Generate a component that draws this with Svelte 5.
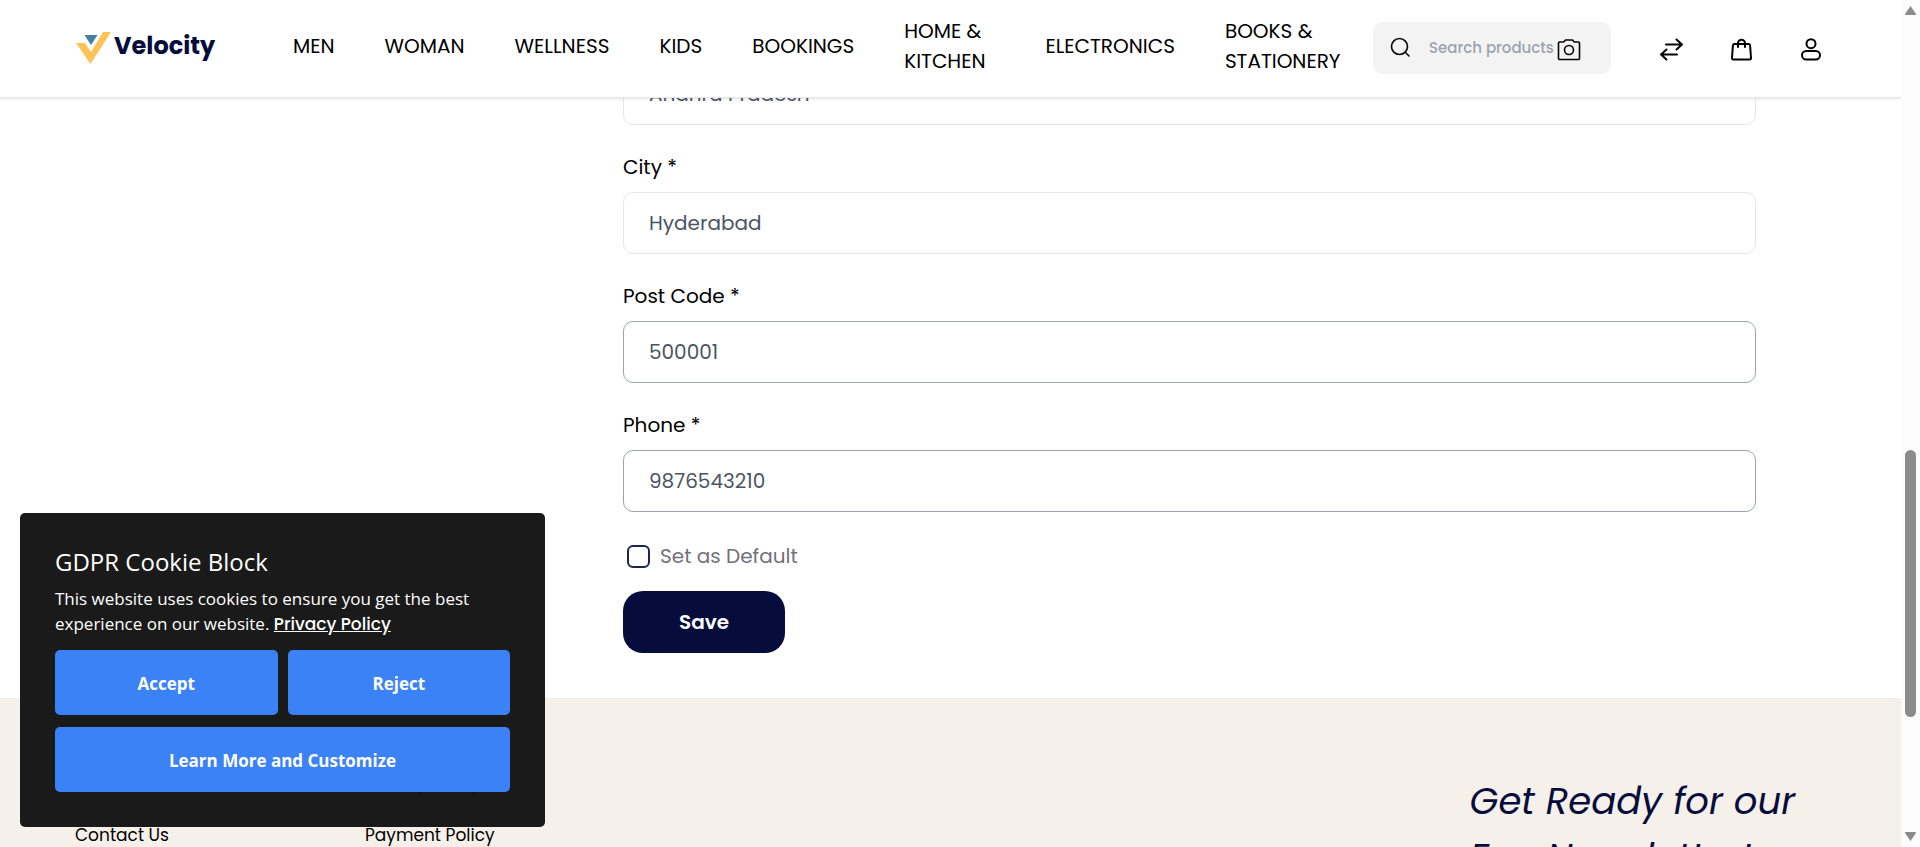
<script>
  const nav = ['MEN', 'WOMAN', 'WELLNESS', 'KIDS', 'BOOKINGS', 'HOME & KITCHEN', 'ELECTRONICS', 'BOOKS & STATIONERY'];
  const fields = [
    { id: 'city', label: 'City *', value: 'Hyderabad', strong: false },
    { id: 'postcode', label: 'Post Code *', value: '500001', strong: true },
    { id: 'phone', label: 'Phone *', value: '9876543210', strong: true }
  ];
  const columns = [
    ['About Us', 'Contact Us'],
    ['Privacy Policy', 'Payment Policy']
  ];
</script>

<div class="page">
  <header>
    <a class="logo" href="#home" aria-label="Velocity">
      <svg width="36" height="32" viewBox="0 0 36 32" aria-hidden="true">
        <path d="M0 11h9l6 9L27 0h8L14.500 32z" fill="#fec356" />
        <path d="M8.500 3h13l-6.500 10z" fill="#477da8" />
      </svg>
      <span>Velocity</span>
    </a>
    <nav>
      {#each nav as item}
        <a href="#shop">{item}</a>
      {/each}
    </nav>
    <form class="search" onsubmit={(e) => e.preventDefault()}>
      <svg class="i20" viewBox="0 0 20 20" aria-hidden="true"><circle cx="8.500" cy="8.500" r="8" /><path d="m14.500 14.500 3.500 3.500" /></svg>
      <input type="text" placeholder="Search products" aria-label="Search products" />
      <button type="button" aria-label="Search by image">
        <svg class="i24" viewBox="0 0 24 24"><path d="M2.500 6H6q1 0 1.500-.8L8.500 4h7l1 1.200Q17 6 18 6h3.500q1 0 1 1v15.500q0 1-1 1h-19q-1 0-1-1V7q0-1 1-1Z" /><circle cx="12" cy="14" r="4.500" /></svg>
      </button>
    </form>
    <div class="actions">
      <a href="#compare" aria-label="Compare"><svg class="i24" viewBox="0 0 24 24"><path d="M7 8.500h16M17.500 3.500l5.500 5-5.500 5M18 18.500H2M7.500 13.500l-5.500 5 5.500 5" /></svg></a>
      <a href="#cart" aria-label="Cart"><svg class="i24" viewBox="0 0 24 24"><path d="M5.500 8h14q1.500 0 1.600 1.500l.9 12.500q0 1.500-1.500 1.500h-16q-1.500 0-1.500-1.500l.9-12.500Q4 8 5.500 8ZM9 11V7.200a3.500 3.500 0 0 1 7 0V11" /></svg></a>
      <a href="#profile" aria-label="Profile"><svg class="i24" viewBox="0 0 24 24"><circle cx="12" cy="7.700" r="4.500" /><rect x="3" y="15" width="18" height="8.500" rx="4.250" /></svg></a>
    </div>
  </header>

  <main>
    <form class="address" onsubmit={(e) => e.preventDefault()}>
      <div class="field">
        <input type="text" value="Andhra Pradesh" aria-label="State" />
      </div>
      {#each fields as f}
        <div class="field">
          <label for={f.id}>{f.label}</label>
          <input id={f.id} class:strong={f.strong} type="text" value={f.value} />
        </div>
      {/each}
      <div class="default">
        <input id="default" type="checkbox" />
        <label for="default">Set as Default</label>
      </div>
      <button class="save" type="submit">Save</button>
    </form>
  </main>

  <footer>
    <div class="links">
      {#each columns as col}
        <ul>
          {#each col as link}
            <li><a href="#info">{link}</a></li>
          {/each}
        </ul>
      {/each}
    </div>
    <p class="news">Get Ready for our<br />Fun Newsletter!</p>
  </footer>

  <section class="cookie" aria-label="Cookie consent">
    <h2>GDPR Cookie Block</h2>
    <p>This website uses cookies to ensure you get the best experience on our website. <a href="#privacy">Privacy Policy</a></p>
    <div class="choices">
      <button type="button">Accept</button>
      <button type="button">Reject</button>
      <button class="wide" type="button">Learn More and Customize</button>
    </div>
  </section>

  <div class="scrollbar" aria-hidden="true">
    <svg width="13" height="11" viewBox="0 0 13 11"><path d="M6.500 1 12 9q0 1-1 1H2q-1 0-1-1Z" /></svg>
    <div class="track"><div class="thumb"></div></div>
    <svg width="13" height="11" viewBox="0 0 13 11"><path d="M6.500 10 12 2q0-1-1-1H2q-1 0-1 1Z" /></svg>
  </div>
</div>

<style>
  :global(body) { margin: 0; }
  .page {
    position: relative;
    height: 100vh;
    overflow: hidden;
    padding-right: 19px;
    box-sizing: border-box;
    display: flex;
    flex-direction: column;
    background: #fff;
    color: #000;
    font-family: Poppins, Inter, sans-serif;
    font-size: 20px;
    line-height: 30px;
  }
  .page * { box-sizing: border-box; }
  a { color: inherit; text-decoration: none; }
  input, button { font: inherit; }
  header {
    position: relative;
    z-index: 2;
    display: flex;
    align-items: center;
    flex: none;
    height: 98px;
    padding: 0 78px 1px 76px;
    background: #fff;
    border-bottom: 1px solid #e5e5e5;
    box-shadow: 0 1px 3px rgb(0 0 0 / 10%);
  }
  .logo { display: flex; align-items: center; gap: 2px; width: 192px; flex: none; color: #060c3b; font-size: 24px; font-weight: 700; }
  .logo span { padding-bottom: 4px; }
  nav { display: flex; align-items: center; flex: 1; padding-bottom: 4px; }
  nav a { padding: 0 25px; }
  .search { display: flex; align-items: center; flex: none; width: 238px; height: 52px; margin-left: 7px; padding: 0 30px 0 18px; border-radius: 10px; background: #f3f3f3; }
  .search input { flex: 1; min-width: 0; margin-left: 18px; padding: 0; border: 0; outline: 0; background: none; font-size: 15px; font-weight: 500; }
  .search input::placeholder { color: #9ca3af; opacity: 1; }
  .search button { display: flex; padding: 0; border: 0; background: none; }
  svg { flex: none; overflow: visible; }
  .i20, .i24 { fill: none; stroke: #060606; stroke-width: 1.6; stroke-linecap: round; stroke-linejoin: round; }
  .i20 { width: 20px; height: 20px; }
  .i24 { width: 24px; height: 24px; }
  .actions { display: flex; gap: 46px; margin-left: 48px; }
  .actions a { display: flex; }
  .actions .i24 { stroke: #000; stroke-width: 2; }
  main { flex: none; padding: 0 145px 45px 623px; }
  .address { margin-top: -35px; }
  .field { display: flex; flex-direction: column; gap: 10px; margin-bottom: 27px; }
  .field input { height: 62px; padding: 0 25px; border: 1px solid #e5e7eb; border-radius: 10px; background: #fff; color: #4b5563; }
  .field input.strong { border-color: #9ca3af; }
  .default { display: flex; align-items: center; gap: 10px; padding: 2px 0 0 4px; color: #71717a; }
  .default input { appearance: none; width: 23px; height: 23px; margin: 0; border: 2px solid #1e2350; border-radius: 6px; }
  .save { display: block; width: 162px; height: 62px; margin-top: 20px; border: 0; border-radius: 20px; background: #060c3b; color: #fff; font-weight: 600; }
  footer { display: flex; justify-content: space-between; flex: 1; min-height: 0; padding: 72px 106px 0 75px; background: #f5f0ea; }
  .links { display: flex; font-size: 17px; }
  ul { width: 290px; margin: 0; padding: 0; list-style: none; }
  li { margin-bottom: 20px; }
  .news { margin: 0; padding-top: 3px; color: #060c3b; font-size: 37px; font-style: italic; line-height: 56px; }
  .cookie { position: absolute; z-index: 3; left: 20px; bottom: 20px; width: 525px; padding: 34px 35px 35px; border-radius: 5px; background: rgb(17 17 17 / 96%); color: #fff; font-family: "Segoe UI", "Open Sans", sans-serif; }
  .cookie h2 { margin: 0; font-size: 24px; font-weight: 400; line-height: 30px; }
  .cookie p { margin: 9px 0 13px; font-size: 17px; line-height: 25px; }
  .cookie p a { font-family: Poppins, Inter, sans-serif; font-weight: 500; text-decoration: underline; }
  .choices { display: grid; grid-template-columns: 1fr 1fr; gap: 12px 10px; }
  .choices button { height: 65px; padding-top: 3px; border: 0; border-radius: 5px; background: #3b82f6; color: #fff; font-size: 17px; font-weight: 700; }
  .choices .wide { grid-column: 1 / 3; }
  .scrollbar { position: absolute; z-index: 3; top: 0; right: 0; bottom: 0; width: 19px; padding: 5px 0; display: flex; flex-direction: column; align-items: center; background: #fcfcfc; fill: #8b8b8b; }
  .track { flex: 1; padding-top: 434px; }
  .thumb { width: 11px; height: 267px; border-radius: 6px; background: #8b8b8b; }
</style>
